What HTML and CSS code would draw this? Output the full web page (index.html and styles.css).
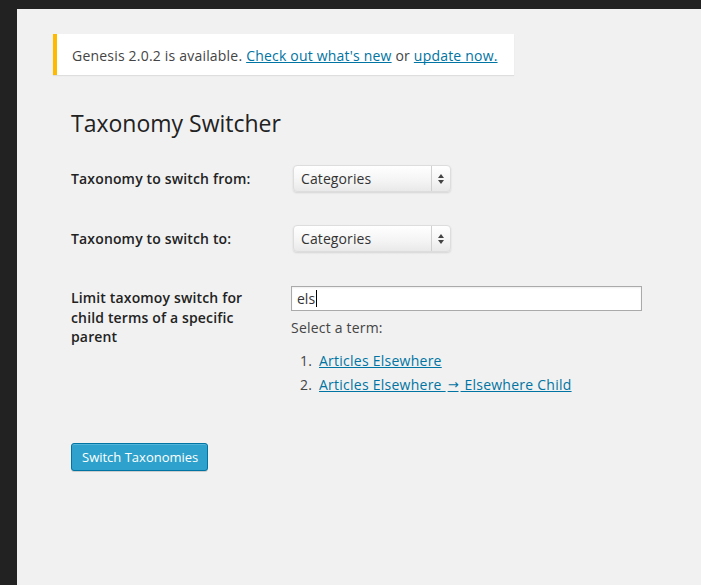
FILE: index.html
```html
<!DOCTYPE html>
<html>
<head>
<meta charset="utf-8">
<link rel="stylesheet" href="styles.css">
</head>
<body>
<div class="topbar"></div>
<div class="main">
  <aside class="sidebar"></aside>
  <div class="content">
    <div class="notice">
      <p>Genesis 2.0.2 is available. <a href="#">Check out what's new</a> or <a href="#">update now.</a></p>
    </div>
    <div class="wrap">
      <h2 class="title">Taxonomy Switcher</h2>
      <div class="row">
        <div class="label">Taxonomy to switch from:</div>
        <div class="field">
          <div class="select"><span class="select-text">Categories</span><span class="select-arrows"><span class="up"></span><span class="down"></span></span></div>
        </div>
      </div>
      <div class="row">
        <div class="label">Taxonomy to switch to:</div>
        <div class="field">
          <div class="select"><span class="select-text">Categories</span><span class="select-arrows"><span class="up"></span><span class="down"></span></span></div>
        </div>
      </div>
      <div class="row row-top">
        <div class="label label-multi">Limit taxomoy switch for child terms of a specific parent</div>
        <div class="field field-wide">
          <div class="input"><span class="input-text">els</span><span class="caret"></span></div>
          <p class="hint">Select a term:</p>
          <ol class="terms">
            <li><a href="#">Articles Elsewhere</a></li>
            <li><a href="#">Articles Elsewhere <span class="arrow">→</span> Elsewhere Child</a></li>
          </ol>
        </div>
      </div>
      <button class="button">Switch Taxonomies</button>
    </div>
  </div>
</div>
</body>
</html>
```
FILE: styles.css
```css
html, body {
  margin: 0;
  padding: 0;
  background: #f1f1f1;
}
body {
  font-family: "Open Sans", "Noto Sans", sans-serif;
  color: #444;
  font-size: 14px;
}
.topbar {
  height: 9px;
  background: #222;
}
.main {
  display: flex;
  min-height: 576px;
}
.sidebar {
  width: 17px;
  flex: none;
  background: #222;
}
.content {
  flex: 1;
  padding: 25px 0 0 36px;
}
.notice {
  width: 442px;
  background: #fff;
  border-left: 4px solid #ffba00;
  box-shadow: 0 1px 1px rgba(0,0,0,0.08);
  padding: 1px 0 0 15px;
  height: 40px;
  display: flex;
  align-items: center;
}
.notice p {
  margin: 0;
  font-size: 14px;
  letter-spacing: 0.2px;
  color: #444;
}
a {
  color: #0074a2;
  text-decoration: underline;
  text-decoration-skip-ink: none;
}
.wrap {
  padding-left: 18px;
}
.title {
  margin: 0;
  padding-top: 34px;
  font-size: 23px;
  font-weight: 400;
  line-height: 29px;
  color: #222;
}
.row {
  display: flex;
  align-items: center;
  margin-top: 27px;
}
.row + .row {
  margin-top: 33px;
}
.row-top {
  align-items: flex-start;
}
.row + .row-top {
  margin-top: 34px;
}
.label {
  width: 222px;
  flex: none;
  font-weight: 600;
  color: #222;
  line-height: 20px;
  letter-spacing: 0.15px;
}
.label-multi {
  width: 190px;
  margin-right: 30px;
  padding-top: 2px;
  line-height: 19.5px;
}
.field {
  display: flex;
  flex-direction: column;
}
.select {
  width: 156px;
  height: 25px;
  border: 1px solid #ddd;
  border-radius: 4px;
  background: linear-gradient(#fff, #f4f4f4 60%, #e9e9e9);
  box-shadow: 0 1px 2px rgba(0,0,0,0.12);
  display: flex;
  align-items: center;
  color: #333;
  font-size: 14px;
  letter-spacing: 0.1px;
}
.select-text {
  flex: 1;
  padding-left: 7px;
}
.select-arrows {
  width: 18px;
  height: 25px;
  border-left: 1px solid #d0d0d0;
  display: flex;
  flex-direction: column;
  align-items: center;
  justify-content: center;
  gap: 2px;
}
.up, .down {
  width: 0;
  height: 0;
  border-left: 3px solid transparent;
  border-right: 3px solid transparent;
}
.up {
  border-bottom: 4px solid #444;
}
.down {
  border-top: 4px solid #444;
}
.field-wide {
  width: 351px;
}
.input {
  height: 23px;
  border: 1px solid #aaa;
  background: #fff;
  box-shadow: inset 0 1px 2px rgba(0,0,0,0.07);
  display: flex;
  align-items: center;
  padding-left: 5px;
  color: #333;
  font-size: 14px;
}
.caret {
  width: 1px;
  height: 17px;
  background: #000;
  margin-left: 1px;
}
.hint {
  margin: 7px 0 0;
  line-height: 20px;
  color: #444;
  letter-spacing: 0.2px;
}
.terms {
  margin: 11px 0 0;
  padding: 0;
  list-style: none;
  counter-reset: term;
  line-height: 24px;
  color: #444;
  letter-spacing: 0.25px;
}
.terms li {
  counter-increment: term;
  display: flex;
  height: 24px;
}
.terms li::before {
  content: counter(term) ".";
  width: 19px;
  padding-left: 9px;
  flex: none;
}
.arrow {
  font-family: "DejaVu Sans", sans-serif;
  font-size: 13px;
  letter-spacing: 0;
  padding: 0 2px;
  vertical-align: 1px;
}
.button {
  margin-top: 46px;
  display: block;
  height: 28px;
  padding: 0 9px 0 10px;
  background: #2ea2cc;
  border: 1px solid #0074a2;
  border-radius: 3px;
  box-shadow: inset 0 1px 0 rgba(120,200,230,0.5), 0 1px 0 rgba(0,0,0,0.15);
  color: #fff;
  font-family: "Open Sans", "Noto Sans", sans-serif;
  font-size: 13px;
  line-height: 26px;
}
```
